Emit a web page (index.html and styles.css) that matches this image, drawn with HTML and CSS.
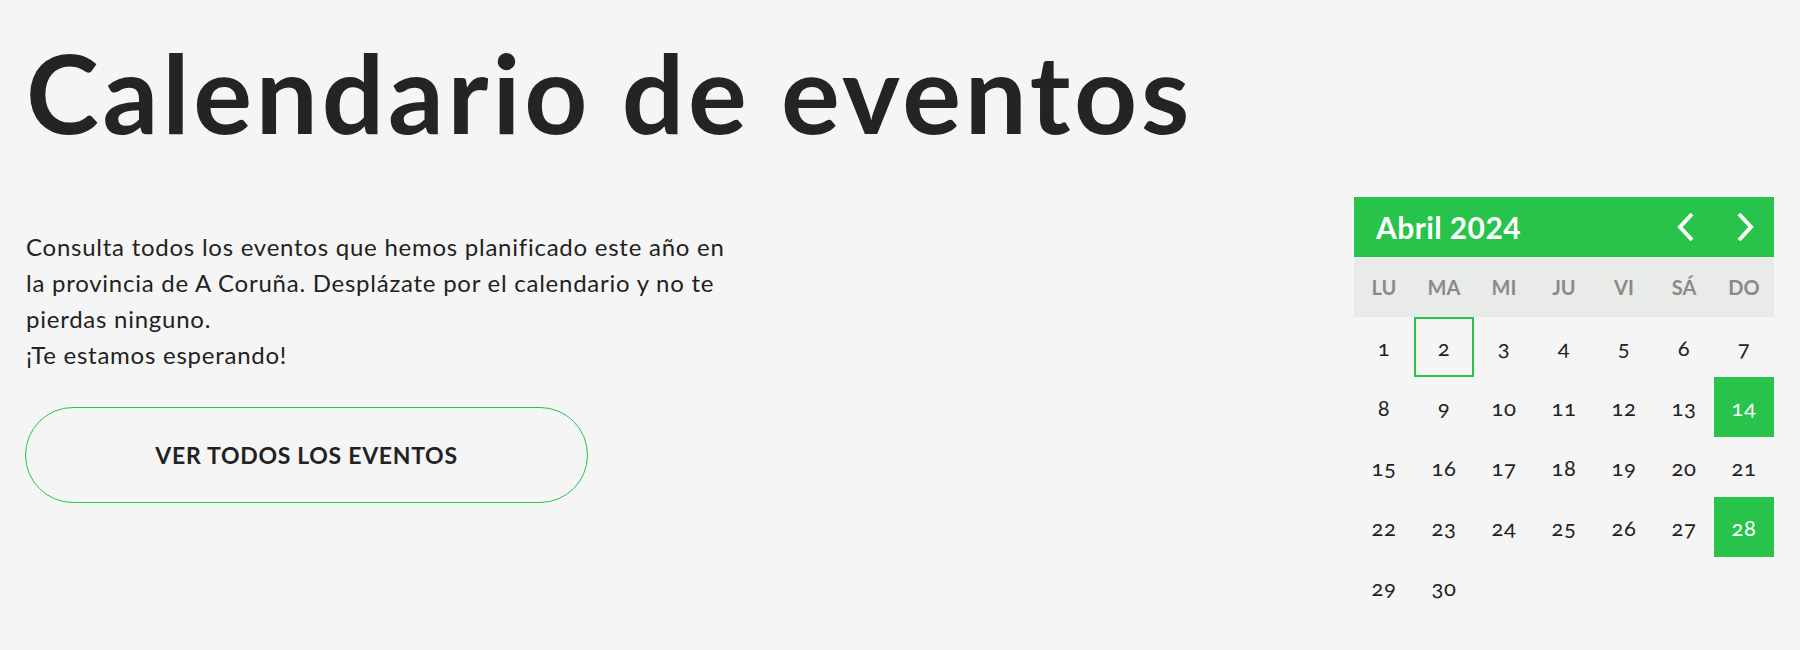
FILE: index.html
```html
<!DOCTYPE html>
<html lang="es">
<head>
<meta charset="utf-8">
<title>Calendario de eventos</title>
<link rel="stylesheet" href="styles.css">
</head>
<body>
<div class="page">
  <h1 class="title">Calendario de eventos</h1>
  <div class="row">
    <div class="intro">
      <p class="text">Consulta todos los eventos que hemos planificado este año en la provincia de A Coruña. Desplázate por el calendario y no te pierdas ninguno.<br>¡Te estamos esperando!</p>
      <a class="btn" href="#">VER TODOS LOS EVENTOS</a>
    </div>
    <div class="cal">
      <div class="cal-head">
        <span class="cal-month">Abril 2024</span>
        <div class="cal-nav">
          <svg class="chev" viewBox="0 0 18 30" width="18" height="30"><polyline points="15,2 3,15 15,28" fill="none" stroke="#fff" stroke-width="4"/></svg>
          <svg class="chev" viewBox="0 0 18 30" width="18" height="30"><polyline points="3,2 15,15 3,28" fill="none" stroke="#fff" stroke-width="4"/></svg>
        </div>
      </div>
      <div class="cal-week">
        <span>LU</span><span>MA</span><span>MI</span><span>JU</span><span>VI</span><span>SÁ</span><span>DO</span>
      </div>
      <div class="cal-days">
        <span>1</span><span class="today">2</span><span>3</span><span>4</span><span>5</span><span>6</span><span>7</span>
        <span>8</span><span>9</span><span>10</span><span>11</span><span>12</span><span>13</span><span class="event">14</span>
        <span>15</span><span>16</span><span>17</span><span>18</span><span>19</span><span>20</span><span>21</span>
        <span>22</span><span>23</span><span>24</span><span>25</span><span>26</span><span>27</span><span class="event">28</span>
        <span>29</span><span>30</span>
      </div>
    </div>
  </div>
</div>
</body>
</html>
```
FILE: styles.css
```css
html, body {
  margin: 0;
  padding: 0;
  background: #f5f5f5;
}
body {
  font-family: Lato, "Open Sans", Arial, sans-serif;
  color: #222;
}
.page {
  padding: 0 26px;
}
.title {
  margin: 25px 0 0;
  font-size: 110px;
  line-height: 132px;
  font-weight: 700;
  color: #242424;
  letter-spacing: 3.8px;
}
.row {
  display: flex;
  justify-content: space-between;
  align-items: flex-start;
  margin-top: 40px;
}
.intro {
  padding-top: 32px;
  width: 716px;
}
.text {
  margin: 0;
  font-size: 24px;
  line-height: 36px;
  letter-spacing: 0.75px;
  color: #222;
}
.btn {
  display: flex;
  align-items: center;
  justify-content: center;
  box-sizing: border-box;
  width: 563px;
  height: 96px;
  margin: 34px 0 0 -1px;
  border: 1.5px solid #27c34b;
  border-radius: 48px;
  font-size: 23px;
  font-weight: 700;
  letter-spacing: 0.7px;
  color: #222;
  text-decoration: none;
}
.cal {
  width: 420px;
}
.cal-head {
  height: 60px;
  background: #27c34b;
  display: flex;
  align-items: center;
  justify-content: space-between;
  padding: 0 20px 0 22px;
}
.cal-month {
  color: #fff;
  font-size: 30px;
  font-weight: 700;
  letter-spacing: 0.4px;
}
.cal-nav {
  display: flex;
  gap: 41px;
  align-items: center;
}
.chev {
  display: block;
}
.cal-week,
.cal-days {
  display: grid;
  grid-template-columns: repeat(7, 60px);
  grid-auto-rows: 60px;
}
.cal-week {
  background: #e9ebe8;
}
.cal-week span {
  display: flex;
  align-items: center;
  justify-content: center;
  font-size: 20px;
  font-weight: 700;
  color: #8a8a8a;
}
.cal-days span {
  display: flex;
  align-items: center;
  justify-content: center;
  font-size: 22px;
  color: #222;
  box-sizing: border-box;
  font-variant-numeric: oldstyle-nums;
  letter-spacing: 0.5px;
}
.cal-days .today {
  border: 2px solid #27c34b;
}
.cal-days .event {
  background: #27c34b;
  color: #fff;
}
```
